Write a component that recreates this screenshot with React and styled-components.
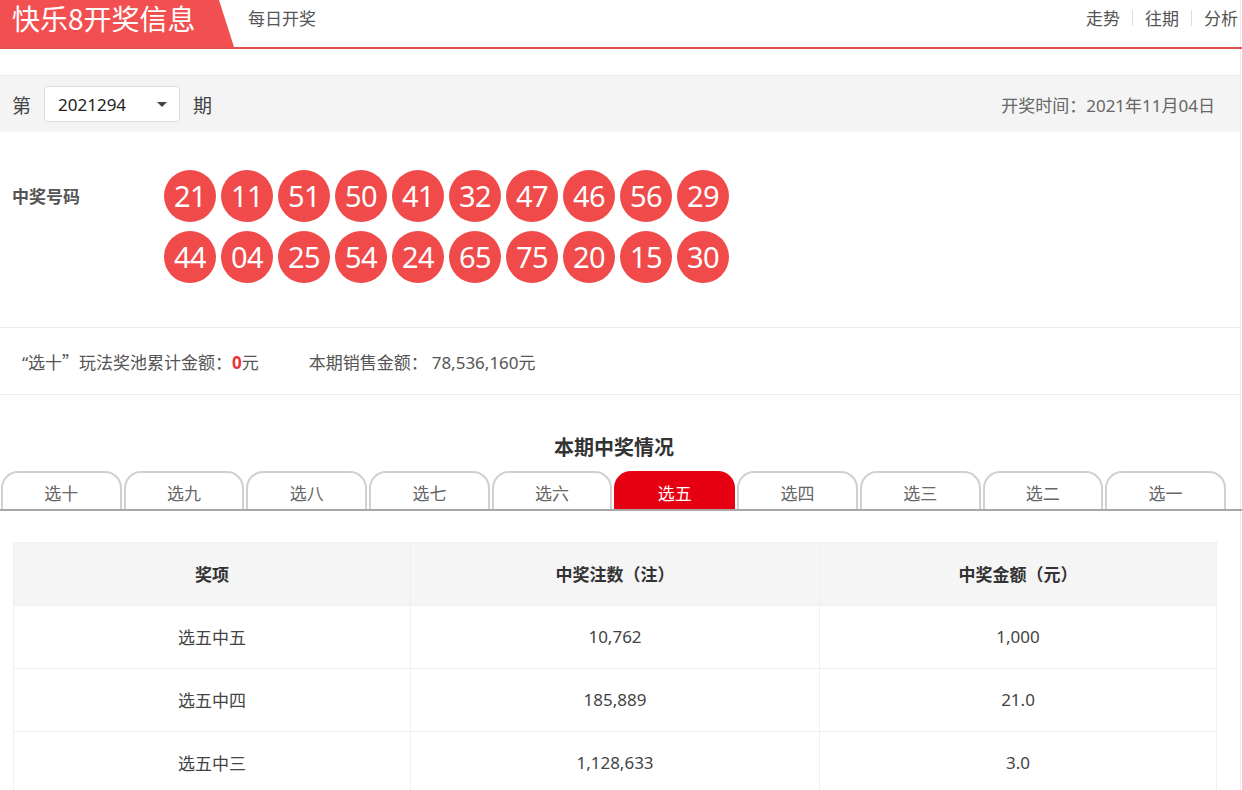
import React from "react";
import styled, { createGlobalStyle } from "styled-components";

const Global = createGlobalStyle`
  html, body { margin: 0; padding: 0; background: #fff; }
  body { font-family: "Noto Sans", "Noto Sans CJK SC", sans-serif; color: #444; overflow: hidden; }
  * { box-sizing: border-box; }
`;

const Page = styled.div`
  width: 1241px;
  border-right: 1px solid #ececec;
  min-height: 790px;
`;

const Header = styled.header`
  display: flex;
  align-items: flex-start;
  height: 49px;
  border-bottom: 2px solid #e55050;
  width: 1242px;
`;

const Logo = styled.div`
  position: relative;
  width: 219px;
  height: 47px;
  background: #f25050;
  color: #fff;
  font-family: "Noto Sans CJK SC", sans-serif;
  font-size: 28px;
  line-height: 36px;
  padding-left: 12px;
  white-space: nowrap;
  &::after {
    content: "";
    position: absolute;
    top: 0;
    right: -15px;
    width: 15px;
    height: 47px;
    background: #f25050;
    clip-path: polygon(0 0, 0 100%, 100% 100%);
  }
`;

const Slogan = styled.div`
  margin-left: 29px;
  font-family: "Noto Sans CJK SC", sans-serif;
  font-size: 17px;
  line-height: 36px;
  color: #555;
`;

const Nav = styled.nav`
  margin-left: auto;
  display: flex;
  align-items: center;
  height: 36px;
  margin-right: -8px;
`;

const NavLink = styled.span`
  font-family: "Noto Sans CJK SC", sans-serif;
  font-size: 17px;
  color: #555;
  padding: 0 12px;
  border-left: ${(p) => (p.$first ? "none" : "1px solid #ddd")};
  line-height: 16px;
`;

const IssueBar = styled.div`
  margin-top: 26px;
  height: 57px;
  background: #f4f4f4;
  border-top: 1px solid #ebebeb;
  display: flex;
  align-items: center;
  padding: 0 25px 0 12px;
  font-size: 19px;
  color: #444;
`;

const CjkLabel = styled.span`
  font-family: "Noto Sans CJK SC", sans-serif;
`;

const Select = styled.div`
  width: 136px;
  height: 36px;
  margin: 0 13px 0 13px;
  background: #fff;
  border: 1px solid #dcdcdc;
  border-radius: 3px;
  display: flex;
  align-items: center;
  padding: 0 12px 0 13px;
  font-size: 17px;
  color: #222;
  justify-content: space-between;
`;

const Caret = styled.span`
  width: 0;
  height: 0;
  border-left: 5px solid transparent;
  border-right: 5px solid transparent;
  border-top: 5px solid #444;
`;

const DrawTime = styled.div`
  margin-left: auto;
  font-family: "Noto Sans CJK SC", sans-serif;
  font-size: 17px;
  color: #666;
`;

const NumbersSection = styled.div`
  display: flex;
  align-items: flex-start;
  padding: 38px 12px 44px;
  border-bottom: 1px solid #ececec;
`;

const NumLabel = styled.div`
  width: 152px;
  font-family: "Noto Sans CJK SC", sans-serif;
  font-weight: 700;
  font-size: 17px;
  color: #555;
  line-height: 52px;
`;

const Balls = styled.div`
  display: grid;
  grid-template-columns: repeat(10, 52px);
  column-gap: 5px;
  row-gap: 9px;
`;

const Ball = styled.div`
  width: 52px;
  height: 52px;
  border-radius: 50%;
  background: #f04a4a;
  color: #fff;
  font-family: "Noto Sans", sans-serif;
  font-size: 29px;
  display: flex;
  align-items: center;
  justify-content: center;
  padding-bottom: 2px;
  letter-spacing: -0.5px;
`;

const InfoRow = styled.div`
  height: 67px;
  display: flex;
  align-items: center;
  padding-left: 22px;
  border-bottom: 1px solid #ececec;
  font-family: "Noto Sans CJK SC", sans-serif;
  font-size: 17px;
  color: #555;
`;

const InfoItem = styled.span`
  margin-right: ${(p) => p.$gap || 0}px;
`;

const Red = styled.b`
  color: #e8333a;
  font-family: "Noto Sans", sans-serif;
`;

const Num = styled.span`
  font-family: "Noto Sans", sans-serif;
`;

const Title = styled.h2`
  margin: 0;
  padding-top: 38px;
  height: 76px;
  text-align: center;
  font-family: "Noto Sans CJK SC", sans-serif;
  font-weight: 700;
  font-size: 20px;
  color: #333;
  line-height: 28px;
  padding-right: 12px;
`;

const Tabs = styled.div`
  display: flex;
  gap: 2px;
  padding-left: 1px;
  border-bottom: 2px solid #a8a8a8;
  width: 1242px;
`;

const Tab = styled.div`
  width: 120.7px;
  height: 38px;
  border: 2px solid ${(p) => (p.$active ? "#e60012" : "#d0d0d0")};
  border-bottom: none;
  border-radius: 17px 17px 0 0;
  background: ${(p) => (p.$active ? "#e60012" : "#fff")};
  color: ${(p) => (p.$active ? "#fff" : "#666")};
  font-family: "Noto Sans CJK SC", sans-serif;
  font-size: 17px;
  display: flex;
  align-items: center;
  justify-content: center;
  padding-top: 2px;
`;

const Table = styled.table`
  margin: 31px 0 0 13px;
  width: 1203px;
  border-collapse: collapse;
  table-layout: fixed;
`;

const Th = styled.th`
  height: 63px;
  background: #f5f5f5;
  border: 1px solid #efefef;
  font-family: "Noto Sans CJK SC", sans-serif;
  font-weight: 700;
  font-size: 17px;
  color: #333;
  padding-bottom: 3px;
`;

const Td = styled.td`
  height: 63px;
  border: 1px solid #efefef;
  text-align: center;
  font-family: "Noto Sans", "Noto Sans CJK SC", sans-serif;
  font-size: 17px;
  color: #444;
  padding-bottom: 3px;
`;

const first = [21, 11, 51, 50, 41, 32, 47, 46, 56, 29, 44, "04", 25, 54, 24, 65, 75, 20, 15, 30];
const tabs = ["选十", "选九", "选八", "选七", "选六", "选五", "选四", "选三", "选二", "选一"];
const rows = [
  ["选五中五", "10,762", "1,000"],
  ["选五中四", "185,889", "21.0"],
  ["选五中三", "1,128,633", "3.0"],
];

export default function App() {
  return (
    <>
      <Global />
      <Page>
        <Header>
          <Logo>快乐8开奖信息</Logo>
          <Slogan>每日开奖</Slogan>
          <Nav>
            <NavLink $first>走势</NavLink>
            <NavLink>往期</NavLink>
            <NavLink>分析</NavLink>
          </Nav>
        </Header>
        <IssueBar>
          <CjkLabel>第</CjkLabel>
          <Select>
            <span>2021294</span>
            <Caret />
          </Select>
          <CjkLabel>期</CjkLabel>
          <DrawTime>
            开奖时间：<Num>2021</Num>年<Num>11</Num>月<Num>04</Num>日
          </DrawTime>
        </IssueBar>
        <NumbersSection>
          <NumLabel>中奖号码</NumLabel>
          <Balls>
            {first.map((n, i) => (
              <Ball key={i}>{n}</Ball>
            ))}
          </Balls>
        </NumbersSection>
        <InfoRow>
          <InfoItem $gap={50}>
            <Num>“</Num>选十”玩法奖池累计金额：<Red>0</Red>元
          </InfoItem>
          <InfoItem>
            本期销售金额： <Num>78,536,160</Num>元
          </InfoItem>
        </InfoRow>
        <Title>本期中奖情况</Title>
        <Tabs>
          {tabs.map((t) => (
            <Tab key={t} $active={t === "选五"}>
              {t}
            </Tab>
          ))}
        </Tabs>
        <Table>
          <colgroup>
            <col style={{ width: "397px" }} />
            <col style={{ width: "409px" }} />
            <col style={{ width: "397px" }} />
          </colgroup>
          <thead>
            <tr>
              <Th>奖项</Th>
              <Th>中奖注数（注）</Th>
              <Th>中奖金额（元）</Th>
            </tr>
          </thead>
          <tbody>
            {rows.map((r) => (
              <tr key={r[0]}>
                {r.map((c, i) => (
                  <Td key={i}>{c}</Td>
                ))}
              </tr>
            ))}
          </tbody>
        </Table>
      </Page>
    </>
  );
}
